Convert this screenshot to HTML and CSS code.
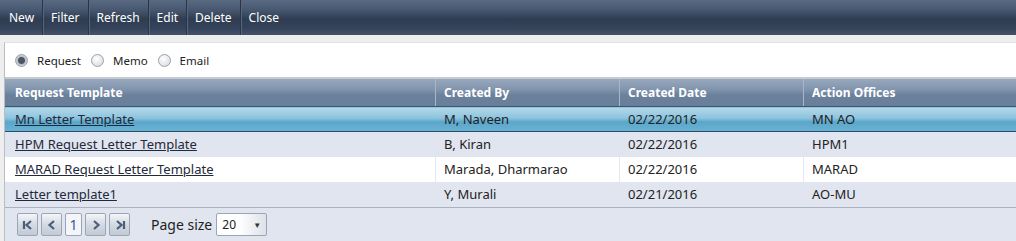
FILE: index.html
```html
<!DOCTYPE html>
<html lang="en">
<head>
    <meta charset="UTF-8">
    <title>Request Templates</title>
    <link rel="stylesheet" href="styles.css">
</head>
<body>
    <div class="toolbar">
        <span class="tool">New</span>
        <span class="tool">Filter</span>
        <span class="tool">Refresh</span>
        <span class="tool">Edit</span>
        <span class="tool">Delete</span>
        <span class="tool">Close</span>
    </div>

    <div class="panel">
        <div class="types">
            <label class="radio"><span class="dot checked"></span>Request</label>
            <label class="radio"><span class="dot"></span>Memo</label>
            <label class="radio"><span class="dot"></span>Email</label>
        </div>

        <table class="grid">
            <thead>
                <tr>
                    <th class="c1">Request Template</th>
                    <th class="c2">Created By</th>
                    <th class="c3">Created Date</th>
                    <th class="c4">Action Offices</th>
                </tr>
            </thead>
            <tbody>
                <tr class="selected">
                    <td><a href="#">Mn Letter Template</a></td>
                    <td>M, Naveen</td>
                    <td>02/22/2016</td>
                    <td>MN AO</td>
                </tr>
                <tr class="alt">
                    <td><a href="#">HPM Request Letter Template</a></td>
                    <td>B, Kiran</td>
                    <td>02/22/2016</td>
                    <td>HPM1</td>
                </tr>
                <tr>
                    <td><a href="#">MARAD Request Letter Template</a></td>
                    <td>Marada, Dharmarao</td>
                    <td>02/22/2016</td>
                    <td>MARAD</td>
                </tr>
                <tr class="alt">
                    <td><a href="#">Letter template1</a></td>
                    <td>Y, Murali</td>
                    <td>02/21/2016</td>
                    <td>AO-MU</td>
                </tr>
            </tbody>
        </table>

        <div class="pager">
            <div class="pages">
                <span class="pbtn">
                    <svg width="12" height="10" viewBox="0 0 12 10"><path d="M2 1v8M9 1L4.5 5 9 9" fill="none" stroke="#4a5f7c" stroke-width="2.2"/></svg>
                </span>
                <span class="pbtn">
                    <svg width="12" height="10" viewBox="0 0 12 10"><path d="M8 1L3.5 5 8 9" fill="none" stroke="#4a5f7c" stroke-width="2.2"/></svg>
                </span>
                <span class="pnum">1</span>
                <span class="pbtn">
                    <svg width="12" height="10" viewBox="0 0 12 10"><path d="M4 1l4.5 4L4 9" fill="none" stroke="#4a5f7c" stroke-width="2.2"/></svg>
                </span>
                <span class="pbtn">
                    <svg width="12" height="10" viewBox="0 0 12 10"><path d="M3 1l4.5 4L3 9M10 1v8" fill="none" stroke="#4a5f7c" stroke-width="2.2"/></svg>
                </span>
            </div>
            <span class="size-label">Page size</span>
            <span class="size-select">20<span class="arrow">&#9660;</span></span>
        </div>
    </div>
</body>
</html>
```

FILE: styles.css
```css
body {
    margin: 0;
    font-family: "Noto Sans", "Open Sans", sans-serif;
    font-size: 13px;
    color: #222;
    background: #eeeeee;
    height: 241px;
    overflow: hidden;
}

.toolbar {
    display: flex;
    height: 35px;
    align-items: stretch;
    background: linear-gradient(to bottom, #5a6a82 0%, #46566e 30%, #2f3d52 55%, #34435a 80%, #44536a 100%);
}

.tool {
    display: flex;
    align-items: center;
    padding: 0 8px 0 9px;
    color: #ffffff;
    font-size: 12px;
    border-right: 1px solid #2a3547;
    box-shadow: 1px 0 0 #56657c;
}

.tool + .tool {
    padding-left: 8px;
}

.tool:last-child {
    border-right: none;
    box-shadow: none;
}

.panel {
    margin: 7px 0 0 4px;
    border-left: 1px solid #b9bec6;
    border-top: 1px solid #e2e2e2;
    background: #ffffff;
}

.types {
    display: flex;
    align-items: center;
    height: 34px;
    padding-left: 10px;
    border-bottom: 2px solid #c6cbd3;
}

.radio {
    display: flex;
    align-items: center;
    gap: 9px;
    margin-right: 10px;
    font-size: 11.5px;
}

.dot {
    width: 11px;
    height: 11px;
    border-radius: 50%;
    border: 1px solid #9aa2ac;
    background: radial-gradient(circle at 40% 35%, #ffffff 0%, #dfe2e6 70%, #c9ced5 100%);
}

.dot.checked {
    background: radial-gradient(circle, #4d5560 0 3px, #b8bec6 4px, #eef0f2 100%);
}

.grid {
    width: 100%;
    border-collapse: collapse;
    table-layout: fixed;
}

.grid th {
    height: 27px;
    padding: 0 8px;
    text-align: left;
    color: #ffffff;
    font-weight: bold;
    font-size: 12px;
    background: linear-gradient(to bottom, #98a9be 0%, #7f93ac 40%, #6a809b 60%, #687e99 100%);
    border-left: 1px solid #a9b6c8;
    border-bottom: 1px solid #3f5670;
}

.grid th.c1 {
    width: 412px;
    padding-left: 10px;
    border-left: none;
}

.grid th.c2 { width: 167px; }
.grid th.c3 { width: 167px; }

.grid tbody tr {
    height: 25px;
}

.grid td {
    padding: 0 8px;
    border-left: 1px solid #e6e8ee;
    white-space: nowrap;
}

.grid td:first-child {
    padding-left: 10px;
    border-left: none;
}

.grid a {
    color: #1f2a3a;
}

.grid tr.alt td {
    background: #e1e5ef;
    border-left-color: #e1e5ef;
}

.grid tr.selected td {
    background: linear-gradient(to bottom, #b4d9ea 0%, #8cc3dd 45%, #5aa6cb 60%, #6cb2d2 100%);
    border-left-color: transparent;
    border-bottom: 1px solid #24506a;
}

.pager {
    display: flex;
    align-items: center;
    height: 34px;
    padding-left: 12px;
    background: #e1e5ef;
    border-top: 1px solid #aab2bf;
}

.pages {
    display: flex;
    gap: 3px;
}

.pbtn,
.pnum {
    display: flex;
    align-items: center;
    justify-content: center;
    width: 19px;
    height: 21px;
    border: 1px solid #9aa6b6;
    border-radius: 2px;
    background: linear-gradient(to bottom, #f4f6f8 0%, #d4dae2 50%, #c3cad4 100%);
}

.pnum {
    width: 15px;
    color: #3a5a8c;
    font-size: 14px;
    background: #f3f5f8;
}

.size-label {
    margin-left: 21px;
    font-size: 14px;
    color: #222;
}

.size-select {
    display: flex;
    align-items: center;
    justify-content: space-between;
    width: 39px;
    height: 21px;
    margin-left: 4px;
    padding: 0 5px;
    border: 1px solid #9aa6b6;
    border-radius: 2px;
    background: linear-gradient(to right, #ffffff 0%, #ffffff 45%, #dde2e8 100%);
    font-size: 12px;
}

.arrow {
    font-size: 8px;
    color: #333;
}
```
